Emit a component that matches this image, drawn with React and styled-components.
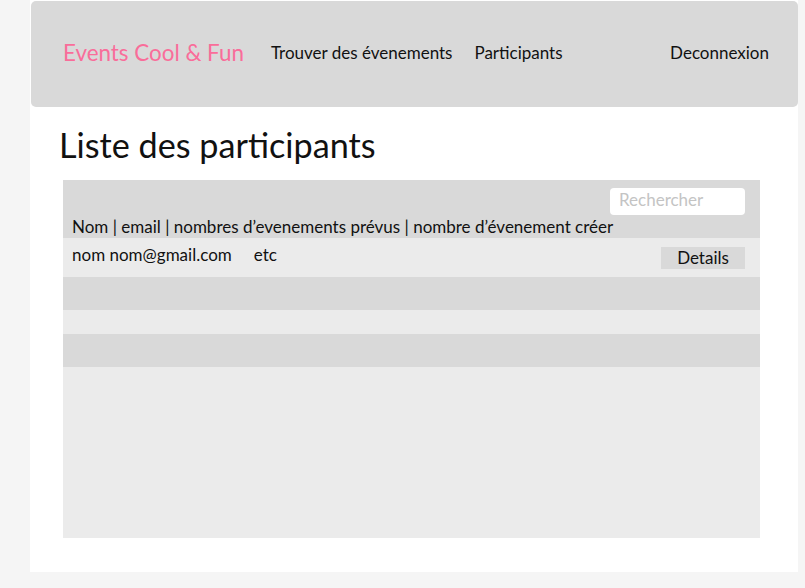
import React from 'react';
import styled, { createGlobalStyle } from 'styled-components';

const GlobalStyle = createGlobalStyle`
  html, body {
    margin: 0;
    padding: 0;
    background: #f5f5f5;
    font-family: Lato, "Open Sans", sans-serif;
  }
`;

const rows = [
  { name: 'nom', email: 'nom@gmail.com', extra: 'etc' },
];

const stripes = [
  { tone: 'dark', height: 33 },
  { tone: 'light', height: 24 },
  { tone: 'dark', height: 33 },
];

const App = () => {
  return (
    <>
      <GlobalStyle />
      <Page>
        <Card>
          <Header>
            <Logo>Events Cool &amp; Fun</Logo>
            <Nav>
              <NavLink>Trouver des évenements</NavLink>
              <NavLink>Participants</NavLink>
            </Nav>
            <Logout>Deconnexion</Logout>
          </Header>

          <Title>Liste des participants</Title>

          <Table>
            <TableHead>
              <Search placeholder="Rechercher" />
              <Columns>Nom | email | nombres d’evenements prévus | nombre d’évenement créer</Columns>
            </TableHead>
            {rows.map((r) => (
              <Row key={r.email}>
                <Cell>
                  {r.name} {r.email}
                  <Extra>{r.extra}</Extra>
                </Cell>
                <DetailsButton>Details</DetailsButton>
              </Row>
            ))}
            {stripes.map((s, i) => (
              <Stripe key={i} tone={s.tone} h={s.height} />
            ))}
            <Filler />
          </Table>
        </Card>
      </Page>
    </>
  );
};

export default App;

const Page = styled.div`
  display: flex;
  height: 588px;
  padding: 0 7px 0 30px;
  box-sizing: border-box;
  background: #f5f5f5;
`;

const Card = styled.div`
  width: 768px;
  height: 572px;
  background: #ffffff;
  display: flex;
  flex-direction: column;
`;

const Header = styled.header`
  margin: 1px 0 0 1px;
  height: 106px;
  background: #d9d9d9;
  border-radius: 5px;
  display: flex;
  align-items: center;
  padding: 0 29px 4px 32px;
  box-sizing: border-box;
`;

const Logo = styled.div`
  color: #f96d9a;
  font-size: 22.4px;
  margin-right: 27px;
`;

const Nav = styled.nav`
  display: flex;
  gap: 22px;
  flex: 1;
`;

const NavLink = styled.span`
  font-size: 17px;
  color: #111;
`;

const Logout = styled.span`
  font-size: 17px;
  color: #111;
`;

const Title = styled.h1`
  margin: 18px 0 0 29px;
  font-size: 34.2px;
  font-weight: 400;
  color: #111;
  line-height: 40px;
`;

const Table = styled.div`
  margin: 15px 0 0 33px;
  width: 697px;
  display: flex;
  flex-direction: column;
`;

const TableHead = styled.div`
  height: 58px;
  background: #d9d9d9;
  display: flex;
  flex-direction: column;
  padding: 8px 15px 0 9px;
  box-sizing: border-box;
`;

const Search = styled.input`
  align-self: flex-end;
  width: 135px;
  height: 27px;
  border: none;
  border-radius: 4px;
  background: #fff;
  padding: 0 9px 4px;
  box-sizing: border-box;
  font-family: Lato, sans-serif;
  font-size: 17px;
  outline: none;

  &::placeholder {
    color: #c4c4c4;
  }
`;

const Columns = styled.div`
  font-size: 17px;
  color: #111;
  line-height: 20px;
  margin-top: 2px;
`;

const Row = styled.div`
  height: 39px;
  background: #ebebeb;
  display: flex;
  align-items: center;
  justify-content: space-between;
  padding: 0 15px 0 9px;
  box-sizing: border-box;
`;

const Cell = styled.div`
  font-size: 17px;
  color: #111;
  margin-top: -6px;
`;

const Extra = styled.span`
  margin-left: 22px;
`;

const DetailsButton = styled.button`
  width: 84px;
  height: 22px;
  border: none;
  background: #d9d9d9;
  font-family: Lato, sans-serif;
  font-size: 17px;
  color: #111;
  padding: 0 0 1px;
  margin-top: 1px;
`;

const Stripe = styled.div`
  height: ${(p) => p.h}px;
  background: ${(p) => (p.tone === 'dark' ? '#d9d9d9' : '#ebebeb')};
`;

const Filler = styled.div`
  height: 171px;
  background: #ebebeb;
`;
